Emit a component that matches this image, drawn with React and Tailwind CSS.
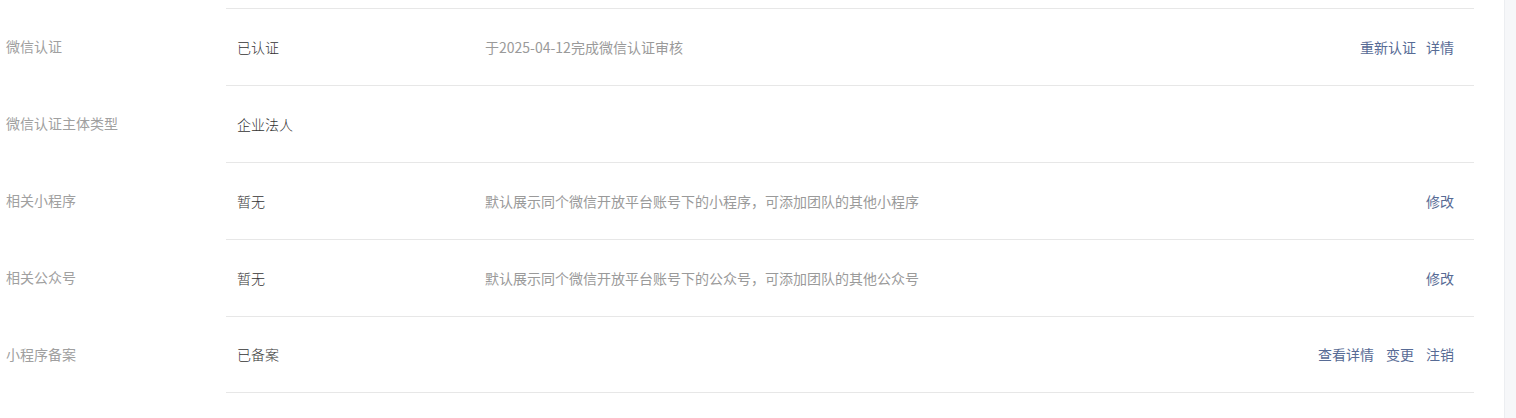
import React from "react";

const rows = [
  {
    label: "微信认证",
    value: "已认证",
    desc: "于2025-04-12完成微信认证审核",
    actions: ["重新认证", "详情"],
    gap: "gap-[10px]",
  },
  { label: "微信认证主体类型", value: "企业法人", desc: "", actions: [], gap: "" },
  {
    label: "相关小程序",
    value: "暂无",
    desc: "默认展示同个微信开放平台账号下的小程序，可添加团队的其他小程序",
    actions: ["修改"],
    gap: "",
  },
  {
    label: "相关公众号",
    value: "暂无",
    desc: "默认展示同个微信开放平台账号下的公众号，可添加团队的其他公众号",
    actions: ["修改"],
    gap: "",
  },
  {
    label: "小程序备案",
    value: "已备案",
    desc: "",
    actions: ["查看详情", "变更", "注销"],
    gap: "gap-[12px]",
  },
];

export default function App() {
  return (
    <div
      className="flex h-[418px] w-full bg-white text-[14px]"
      style={{ fontFamily: '"Noto Sans CJK SC", "Liberation Sans", sans-serif' }}
    >
      <div className="flex-1 pt-[8px] pr-[30px]">
        {rows.map((row, i) => (
          <div key={row.label} className="flex">
            <div className="flex w-[226px] items-center pl-[6px] text-[#a0a0a0]">
              {row.label}
            </div>
            <div
              className={
                "flex h-[77px] flex-1 items-center border-t border-[#e7e7e7] pr-[20px] " +
                (i === rows.length - 1 ? "border-b" : "")
              }
            >
              <div className="w-[259px] pl-[11px] font-light text-[#333333]">{row.value}</div>
              <div className="flex-1 text-[#9a9a9a]">{row.desc}</div>
              <div className={"flex text-[#576b95] " + row.gap}>
                {row.actions.map((a) => (
                  <a key={a} href="#" className="hover:opacity-80">
                    {a}
                  </a>
                ))}
              </div>
            </div>
          </div>
        ))}
      </div>
      <div className="w-[12px] border-l border-[#eceef1] bg-[#f6f7f9]" />
    </div>
  );
}
